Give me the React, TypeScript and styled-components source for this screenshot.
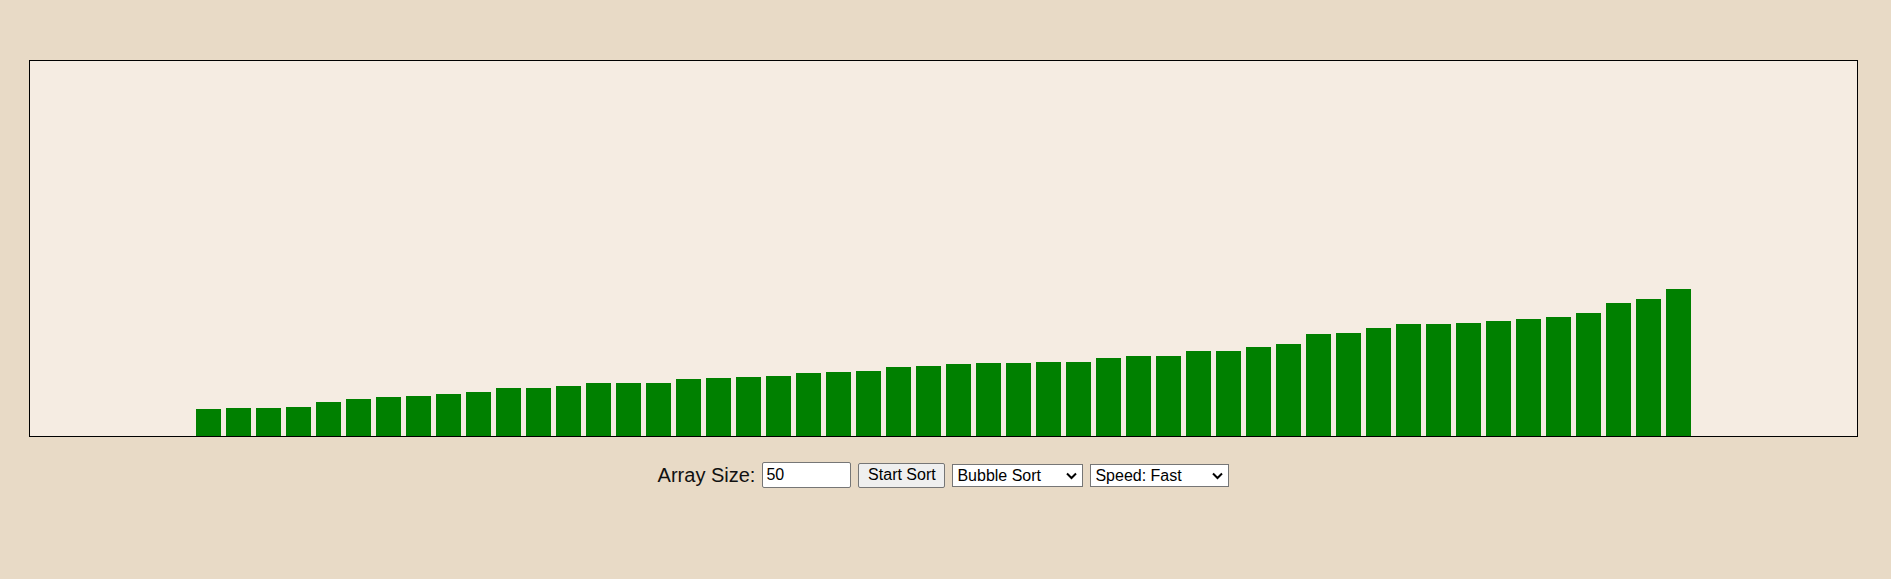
import React, { useState } from 'react';
import styled, { createGlobalStyle } from 'styled-components';

const GlobalStyle = createGlobalStyle`
  html, body {
    margin: 0;
    padding: 0;
    background: #e8dac6;
    font-family: "Liberation Sans", Arial, sans-serif;
  }
`;

const barHeights = [
  27, 28, 28, 29, 34, 37, 39, 40, 42, 44,
  48, 48, 50, 53, 53, 53, 57, 58, 59, 60,
  63, 64, 65, 69, 70, 72, 73, 73, 74, 74,
  78, 80, 80, 85, 85, 89, 92, 102, 103, 108,
  112, 112, 113, 115, 117, 119, 123, 133, 137, 147,
];

const Chevron = () => (
  <ChevronIcon width="11" height="8" viewBox="0 0 11 8" aria-hidden="true">
    <path d="M1 1.5 L5.5 6 L10 1.5" fill="none" stroke="#000" strokeWidth="2" />
  </ChevronIcon>
);

const App = () => {
  const [size, setSize] = useState('50');

  return (
    <Page>
      <GlobalStyle />
      <BarBox>
        {barHeights.map((h, i) => (
          <Bar key={i} style={{ height: h }} />
        ))}
      </BarBox>
      <Controls>
        <Label htmlFor="array-size">Array Size:</Label>
        <SizeInput
          id="array-size"
          type="text"
          value={size}
          onChange={(e) => setSize(e.target.value)}
        />
        <StartButton type="button">Start Sort</StartButton>
        <SelectWrap>
          <Dropdown $width={131} defaultValue="bubble">
            <option value="bubble">Bubble Sort</option>
            <option value="selection">Selection Sort</option>
            <option value="insertion">Insertion Sort</option>
            <option value="merge">Merge Sort</option>
            <option value="quick">Quick Sort</option>
          </Dropdown>
          <Chevron />
        </SelectWrap>
        <SelectWrap>
          <Dropdown $width={139} defaultValue="fast">
            <option value="slow">Speed: Slow</option>
            <option value="medium">Speed: Medium</option>
            <option value="fast">Speed: Fast</option>
          </Dropdown>
          <Chevron />
        </SelectWrap>
      </Controls>
    </Page>
  );
};

export default App;

const Page = styled.div`
  width: 1891px;
  height: 579px;
  box-sizing: border-box;
  padding: 60px 0 0 29px;
`;

const BarBox = styled.div`
  box-sizing: border-box;
  width: 1829px;
  height: 377px;
  border: 1px solid #000;
  background: #f5ece2;
  display: flex;
  align-items: flex-end;
  justify-content: center;
  gap: 5px;
`;

const Bar = styled.div`
  width: 25px;
  flex: 0 0 25px;
  background: #008000;
`;

const Controls = styled.div`
  width: 1829px;
  height: 26px;
  margin-top: 25px;
  display: flex;
  align-items: center;
  justify-content: center;
  gap: 7px;
`;

const Label = styled.label`
  font-size: 20px;
  color: #111;
  line-height: 23px;
`;

const SizeInput = styled.input`
  box-sizing: border-box;
  width: 89px;
  height: 26px;
  margin: 0;
  padding: 1px 3px;
  font-family: "Liberation Sans", Arial, sans-serif;
  font-size: 16px;
  color: #000;
  background: #fff;
  border: 1px solid #767676;
  border-radius: 2px;
  outline: none;
`;

const StartButton = styled.button`
  box-sizing: border-box;
  width: 87px;
  height: 25px;
  margin: 0;
  padding: 0 6px;
  font-family: "Liberation Sans", Arial, sans-serif;
  font-size: 16px;
  color: #000;
  background: #efefef;
  border: 1px solid #767676;
  border-radius: 2px;
`;

const SelectWrap = styled.div`
  position: relative;
  display: inline-flex;
`;

const Dropdown = styled.select<{ $width: number }>`
  box-sizing: border-box;
  width: ${({ $width }) => $width}px;
  height: 23px;
  margin: 0;
  padding: 0 20px 0 4px;
  appearance: none;
  -webkit-appearance: none;
  font-family: "Liberation Sans", Arial, sans-serif;
  font-size: 16px;
  line-height: 21px;
  color: #000;
  background: #fff;
  border: 1px solid #767676;
  border-radius: 0;
`;

const ChevronIcon = styled.svg`
  position: absolute;
  right: 6px;
  top: 8px;
  pointer-events: none;
`;
